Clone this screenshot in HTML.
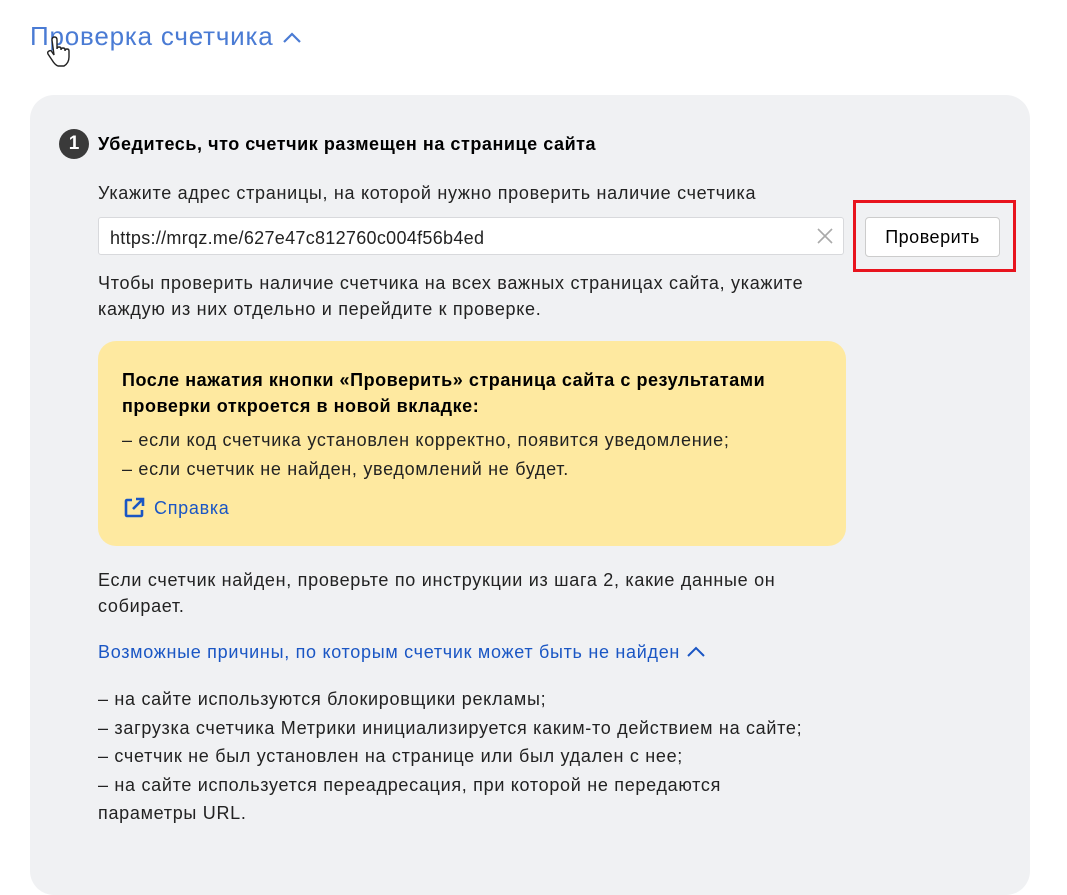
<!DOCTYPE html>
<html><head><meta charset="utf-8"><style>
body{margin:0;width:1067px;height:857px;background:#fff;font-family:"Liberation Sans",sans-serif;color:#000;position:relative;overflow:hidden}
.a{position:absolute;white-space:nowrap}
.t{font-size:18px;line-height:26px;letter-spacing:0.7px}
.b{letter-spacing:0.55px}
</style></head><body>
<div class="a" style="left:30px;top:18px;font-size:26px;color:#4a7bd4;line-height:36px;letter-spacing:0.8px">Проверка счетчика <svg width="20" height="14" viewBox="0 0 20 14" style="margin-left:0px"><path d="M2 11 L10 3 L18 11" fill="none" stroke="#4a7bd4" stroke-width="2.2"/></svg></div>
<svg class="a" style="left:44px;top:36px" width="28" height="32" viewBox="0 0 28 32"><path d="M8 4 q0-3 2.5-3 t2.5 3 v9 q0-2 2-2 t2 2 v1 q0-2 2-2 t2 2 v1 q0-2 2-2 t2 2 v6 q0 6-5 9 h-6 q-3-1-6-6 l-4-6 q-1-2 1-3 t3 1 l2 3z" fill="#fff" stroke="#222" stroke-width="1.4"/></svg>
<div class="a" style="left:30px;top:95px;width:1000px;height:800px;background:#f0f1f3;border-radius:24px"></div>
<div class="a" style="left:59px;top:129px;width:30px;height:30px;border-radius:50%;background:#3a3a3a;color:#fff;font-weight:bold;font-size:19px;line-height:30px;text-align:center">1</div>
<div class="a t b" style="left:98px;top:131px;font-weight:bold">Убедитесь, что счетчик размещен на странице сайта</div>
<div class="a t" style="left:98px;top:180px;color:#222">Укажите адрес страницы, на которой нужно проверить наличие счетчика</div>
<div class="a" style="left:98px;top:217px;width:746px;height:38px;background:#fff;border:1px solid #d8d9dc;border-radius:3px;box-sizing:border-box"></div>
<div class="a t" style="left:110px;top:225px;color:#222;letter-spacing:0.3px">https://mrqz.me/627e47c812760c004f56b4ed</div>
<svg class="a" style="left:817px;top:228px" width="16" height="16"><path d="M1 1L15 15M15 1L1 15" stroke="#aaa" stroke-width="1.6"/></svg>
<div class="a" style="left:865px;top:217px;width:135px;height:40px;background:#fff;border:1px solid #ccc;border-radius:4px;box-sizing:border-box;font-size:18px;line-height:38px;text-align:center;letter-spacing:0.5px">Проверить</div>
<div class="a" style="left:853px;top:200px;width:163px;height:72px;border:3px solid #e8141e;box-sizing:border-box"></div>
<div class="a t" style="left:98px;top:270px;color:#222">Чтобы проверить наличие счетчика на всех важных страницах сайта, укажите<br>каждую из них отдельно и перейдите к проверке.</div>
<div class="a" style="left:98px;top:341px;width:748px;height:205px;background:#fee9a0;border-radius:18px"></div>
<div class="a t b" style="left:122px;top:367px;font-weight:bold">После нажатия кнопки «Проверить» страница сайта с результатами<br>проверки откроется в новой вкладке:</div>
<div class="a t" style="left:122px;top:426px;color:#222;line-height:29px">– если код счетчика установлен корректно, появится уведомление;<br>– если счетчик не найден, уведомлений не будет.</div>
<svg class="a" style="left:123px;top:497px" width="22" height="22" viewBox="0 0 22 22"><path d="M9 3H4a1 1 0 0 0-1 1v14a1 1 0 0 0 1 1h14a1 1 0 0 0 1-1v-5M13 2h7v7M20 2L10 12" fill="none" stroke="#1a56c4" stroke-width="2.6"/></svg>
<div class="a t" style="left:154px;top:495px;color:#1a56c4">Справка</div>
<div class="a t" style="left:98px;top:567px;color:#222">Если счетчик найден, проверьте по инструкции из шага 2, какие данные он<br>собирает.</div>
<div class="a t" style="left:98px;top:639px;color:#1a56c4">Возможные причины, по которым счетчик может быть не найден <svg width="20" height="12" viewBox="0 0 20 12"><path d="M2 10L10 2L18 10" fill="none" stroke="#1a56c4" stroke-width="2"/></svg></div>
<div class="a t" style="left:98px;top:685px;color:#222;line-height:28.5px">– на сайте используются блокировщики рекламы;<br>– загрузка счетчика Метрики инициализируется каким-то действием на сайте;<br>– счетчик не был установлен на странице или был удален с нее;<br>– на сайте используется переадресация, при которой не передаются<br>параметры URL.</div>
</body></html>
